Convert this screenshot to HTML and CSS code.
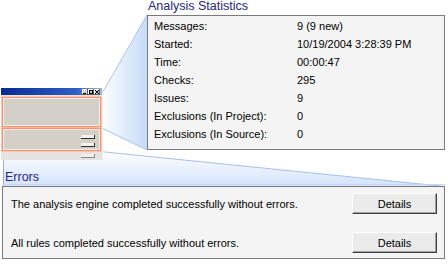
FILE: index.html
```html
<!DOCTYPE html>
<html>
<head>
<meta charset="utf-8">
<link rel="stylesheet" href="styles.css">
</head>
<body>
<div class="page">
  <svg class="callouts" width="448" height="269" viewBox="0 0 448 269">
    <defs>
      <linearGradient id="gUp" x1="0" y1="0" x2="1" y2="0">
        <stop offset="0" stop-color="#ffffff"/>
        <stop offset="1" stop-color="#c6dbf8"/>
      </linearGradient>
      <linearGradient id="gDown" x1="0" y1="0" x2="0" y2="1">
        <stop offset="0" stop-color="#ffffff"/>
        <stop offset="1" stop-color="#d3e3fb"/>
      </linearGradient>
    </defs>
    <polygon points="100,97 147,15 147,150 100,127" fill="url(#gUp)"/>
    <line x1="100" y1="97" x2="147" y2="15" stroke="#a9c3ec" stroke-width="1"/>
    <line x1="100" y1="127" x2="147" y2="150" stroke="#a9c3ec" stroke-width="1"/>
    <polygon points="3,151 100,151 445,186 3,186" fill="url(#gDown)"/>
    <line x1="100" y1="151.5" x2="445" y2="186.5" stroke="#a9c1ea" stroke-width="1"/>
    <line x1="3.5" y1="151" x2="3.5" y2="186" stroke="#a0b0c8" stroke-width="1"/>
    <line x1="3" y1="184.5" x2="445" y2="184.5" stroke="#c4d8f6" stroke-width="1"/>
  </svg>

  <div class="top">
    <div class="thumb-col">
      <div class="thumb">
        <div class="thumb-title">
          <span class="tb-btn"><svg width="6" height="6" viewBox="0 0 6 6"><rect x="1" y="4" width="3" height="1" fill="#000"/></svg></span>
          <span class="tb-btn"><svg width="6" height="6" viewBox="0 0 6 6"><rect x="1.5" y="1.5" width="3" height="3" fill="none" stroke="#000" stroke-width="1"/></svg></span>
          <span class="tb-btn"><svg width="6" height="6" viewBox="0 0 6 6"><path d="M1 1L5 5M5 1L1 5" stroke="#000" stroke-width="1"/></svg></span>
        </div>
        <div class="thumb-body">
          <div class="tpanel tpanel-1"></div>
          <div class="tpanel tpanel-2">
            <span class="tbar"></span>
            <span class="tbar"></span>
          </div>
          <div class="tfoot"><span class="tbar"></span></div>
        </div>
      </div>
    </div>

    <div class="stats">
      <div class="section-title stats-title">Analysis Statistics</div>
      <div class="stats-box">
        <div class="row"><span class="lbl">Messages:</span><span class="val">9 (9 new)</span></div>
        <div class="row"><span class="lbl">Started:</span><span class="val">10/19/2004 3:28:39 PM</span></div>
        <div class="row"><span class="lbl">Time:</span><span class="val">00:00:47</span></div>
        <div class="row"><span class="lbl">Checks:</span><span class="val">295</span></div>
        <div class="row"><span class="lbl">Issues:</span><span class="val">9</span></div>
        <div class="row"><span class="lbl">Exclusions (In Project):</span><span class="val">0</span></div>
        <div class="row"><span class="lbl">Exclusions (In Source):</span><span class="val">0</span></div>
      </div>
    </div>
  </div>

  <div class="errors">
    <div class="section-title errors-title">Errors</div>
    <div class="errors-box">
      <div class="erow"><span class="etext">The analysis engine completed successfully without errors.</span><button class="btn">Details</button></div>
      <div class="erow"><span class="etext">All rules completed successfully without errors.</span><button class="btn">Details</button></div>
    </div>
  </div>
</div>
</body>
</html>
```

FILE: styles.css
```css
* { box-sizing: border-box; }
html, body { margin: 0; padding: 0; background: #ffffff; }
body { width: 448px; height: 269px; overflow: hidden; font-family: "Liberation Sans", Arial, sans-serif; font-size: 11px; color: #000; }
.page { position: relative; width: 448px; height: 269px; }
.callouts { position: absolute; left: 0; top: 0; z-index: 0; }

.top { position: relative; z-index: 1; display: flex; height: 160px; }
.thumb-col { width: 147px; padding-top: 88px; padding-left: 1px; }
.thumb { width: 102px; height: 72px; background: #e4e3df; border-right: 1px solid #f0f0f0; display: flex; flex-direction: column; }
.thumb-title { height: 7px; background: linear-gradient(to right, #0a2a92, #2f5fc6 75%, #a6b8d8); display: flex; justify-content: flex-end; align-items: center; padding-right: 2px; }
.tb-btn { width: 6px; height: 6px; background: #d4d0c8; display: flex; box-shadow: inset -1px -1px 0 #606060, inset 1px 1px 0 #fff; }
.tb-btn svg { display: block; }
.thumb-body { flex: 1; display: flex; flex-direction: column; padding: 2px 1px 0 1px; gap: 1px; }
.tpanel { border: 1px solid #ff8e6e; box-shadow: 0 0 0 1px rgba(255,180,150,0.55), inset 0 0 0 1px #f4f1ec; background: #d4d0c8; }
.tpanel-1 { height: 30px; }
.tpanel-2 { height: 23px; display: flex; flex-direction: column; align-items: flex-end; padding: 6px 5px 0 0; gap: 4px; }
.tfoot { height: 8px; display: flex; justify-content: flex-end; padding: 2px 6px 0 0; }
.tbar { display: block; width: 14px; height: 4px; background: #f2f1ee; border-bottom: 1px solid #303030; border-right: 1px solid #303030; }
.tfoot .tbar { border-color: #888; }

.stats { width: 298px; display: flex; flex-direction: column; }
.section-title { color: #262686; font-size: 12.5px; }
.stats-title { height: 15px; padding-left: 1px; line-height: 13px; }
.stats-box { height: 135px; background: #f4f4f4; border: 1px solid #7a7a7a; padding: 1px 0 0 6px; }
.row { height: 18px; line-height: 18px; display: flex; white-space: nowrap; }
.lbl { width: 143px; }

.errors { position: relative; z-index: 1; }
.errors-title { height: 26px; padding: 11px 0 0 5px; line-height: 13px; }
.errors-box { margin-left: 2px; width: 443px; height: 73px; background: #f4f4f4; border: 1px solid #7a7a7a; padding: 6px 7px 0 8px; display: flex; flex-direction: column; gap: 18px; }
.erow { height: 21px; display: flex; align-items: center; justify-content: space-between; }
.btn { width: 85px; height: 21px; padding: 0; font-family: "Liberation Sans", Arial, sans-serif; font-size: 11px; color: #000; background: #ebebeb; border: 1px solid; border-color: #ffffff #404040 #404040 #ffffff; box-shadow: inset -1px -1px 0 #a0a0a0; }
```
